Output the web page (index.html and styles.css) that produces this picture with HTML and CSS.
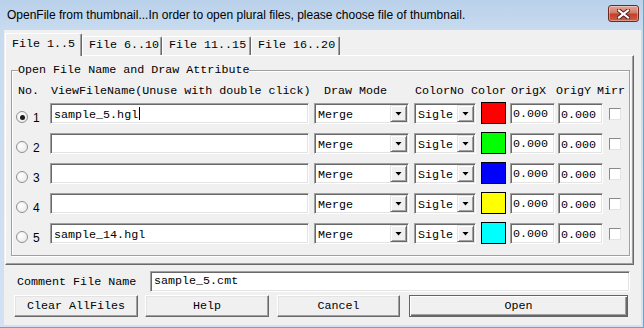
FILE: index.html
```html
<!DOCTYPE html>
<html lang="en">

<head>
  <meta charset="UTF-8">
  <title>OpenFile from thumbnail</title>
  <link rel="stylesheet" href="styles.css">
</head>

<body>
  <div class="window">
    <div class="titlebar">
      <span class="title">OpenFile from thumbnail...In order to open plural files, please choose file of thumbnail.</span>
      <div class="close">
        <svg width="13" height="10" viewBox="0 0 13 10">
          <path d="M2 1.5L11 8.5M11 1.5L2 8.5" stroke="#4a1a14" stroke-width="4" stroke-linecap="square" />
          <path d="M2 1.5L11 8.5M11 1.5L2 8.5" stroke="#fff" stroke-width="2.2" stroke-linecap="square" />
        </svg>
      </div>
    </div>

    <div class="client">
      <div class="tabs">
        <div class="tab active">File 1..5</div>
        <div class="tab t2">File 6..10</div>
        <div class="tab t3">File 11..15</div>
        <div class="tab t4">File 16..20</div>
      </div>

      <div class="panel">
        <fieldset class="group">
          <legend>Open File Name and Draw Attribute</legend>
          <div class="head">
            <span class="h-no">No.</span>
            <span class="h-name">ViewFileName(Unuse with double click)</span>
            <span class="h-mode">Draw Mode</span>
            <span class="h-cno">ColorNo</span>
            <span class="h-col">Color</span>
            <span class="h-ox">OrigX</span>
            <span class="h-oy">OrigY</span>
            <span class="h-mir">Mirr</span>
          </div>

          <div class="row">
            <span class="radio checked"></span>
            <span class="num">1</span>
            <div class="edit name">sample_5.hgl<span class="caret"></span></div>
            <div class="edit combo mode">Merge<span class="dd"></span></div>
            <div class="edit combo cno">Sigle<span class="dd"></span></div>
            <span class="swatch red"></span>
            <div class="edit orig ox">0.000</div>
            <div class="edit orig oy">0.000</div>
            <span class="check"></span>
          </div>
          <div class="row">
            <span class="radio"></span>
            <span class="num">2</span>
            <div class="edit name"></div>
            <div class="edit combo mode">Merge<span class="dd"></span></div>
            <div class="edit combo cno">Sigle<span class="dd"></span></div>
            <span class="swatch green"></span>
            <div class="edit orig ox">0.000</div>
            <div class="edit orig oy">0.000</div>
            <span class="check"></span>
          </div>
          <div class="row">
            <span class="radio"></span>
            <span class="num">3</span>
            <div class="edit name"></div>
            <div class="edit combo mode">Merge<span class="dd"></span></div>
            <div class="edit combo cno">Sigle<span class="dd"></span></div>
            <span class="swatch blue"></span>
            <div class="edit orig ox">0.000</div>
            <div class="edit orig oy">0.000</div>
            <span class="check"></span>
          </div>
          <div class="row">
            <span class="radio"></span>
            <span class="num">4</span>
            <div class="edit name"></div>
            <div class="edit combo mode">Merge<span class="dd"></span></div>
            <div class="edit combo cno">Sigle<span class="dd"></span></div>
            <span class="swatch yellow"></span>
            <div class="edit orig ox">0.000</div>
            <div class="edit orig oy">0.000</div>
            <span class="check"></span>
          </div>
          <div class="row">
            <span class="radio"></span>
            <span class="num">5</span>
            <div class="edit name">sample_14.hgl</div>
            <div class="edit combo mode">Merge<span class="dd"></span></div>
            <div class="edit combo cno">Sigle<span class="dd"></span></div>
            <span class="swatch cyan"></span>
            <div class="edit orig ox">0.000</div>
            <div class="edit orig oy">0.000</div>
            <span class="check"></span>
          </div>
        </fieldset>
      </div>

      <div class="comment">
        <span class="comment-label">Comment File Name</span>
        <div class="edit comment-edit">sample_5.cmt</div>
      </div>

      <div class="buttons">
        <div class="button b-clear">Clear AllFiles</div>
        <div class="button b-help">Help</div>
        <div class="button b-cancel">Cancel</div>
        <div class="button b-open">Open</div>
      </div>
    </div>
  </div>
</body>

</html>
```

FILE: styles.css
```css
* {
  box-sizing: border-box;
}

body {
  margin: 0;
  padding: 0;
  background-color: #c9dcf1;
}

.window {
  width: 644px;
  height: 328px;
  background: linear-gradient(#b9d1ea, #c8dbef 30px, #d2e2f3);
  border-right: 1px solid #3fb6e8;
  border-bottom: 1px solid #3fb6e8;
  display: flex;
  flex-direction: column;
  overflow: hidden;
}

/* title bar */
.titlebar {
  height: 30px;
  flex-shrink: 0;
  display: flex;
  align-items: flex-start;
  padding: 0 4px 0 7px;
}

.title {
  flex: 1;
  margin-top: 8px;
  font-family: "Liberation Sans", Arial, sans-serif;
  font-size: 12px;
  line-height: 15px;
  color: #000;
  white-space: nowrap;
}

.close {
  width: 31px;
  height: 17px;
  margin-top: 5px;
  border: 1px solid #6a2a22;
  border-radius: 3px;
  background: linear-gradient(#e4a597, #d47a66 45%, #c0402c 55%, #cf5d45);
  box-shadow: inset 0 0 0 1px rgba(255, 255, 255, 0.35);
  display: flex;
  align-items: center;
  justify-content: center;
}

/* client area */
.client {
  margin-left: 4px;
  width: 637px;
  height: 295px;
  flex-shrink: 0;
  background-color: #f0f0f0;
  font-family: "Liberation Mono", "Courier New", monospace;
  font-size: 11.7px;
  color: #000;
}

.tabs {
  height: 25px;
  padding-left: 1px;
  display: flex;
  align-items: flex-end;
  position: relative;
  z-index: 1;
}

.tab {
  height: 19px;
  line-height: 17px;
  padding-left: 6px;
  white-space: nowrap;
  background-color: #f0f0f0;
  border-top: 1px solid #fff;
  border-left: 1px solid #fff;
  border-right: 1px solid #696969;
  border-radius: 2px 2px 0 0;
  box-shadow: inset -1px 0 #a0a0a0;
}

.tab.active {
  width: 77px;
  height: 23px;
  margin-bottom: -1px;
  padding-left: 6px;
  line-height: 20px;
}

.t2 {
  width: 80px;
}

.t3 {
  width: 89px;
}

.t4 {
  width: 89px;
}

.panel {
  width: 629px;
  height: 210px;
  margin-left: 1px;
  padding: 7px 0 0 5px;
  border-top: 1px solid #fff;
  border-left: 1px solid #fff;
  border-right: 1px solid #696969;
  border-bottom: 1px solid #696969;
  box-shadow: inset -1px -1px #a0a0a0;
}

.group {
  width: 619px;
  height: 193px;
  margin: 0;
  padding: 0 4px;
  border: 1px solid #a0a0a0;
  box-shadow: inset 1px 1px #fff, 1px 1px #fff;
}

.group legend {
  margin-left: 2px;
  padding: 0;
  line-height: 14px;
  background-color: #f0f0f0;
}

.head {
  display: flex;
  height: 14px;
  line-height: 14px;
  margin-top: 7px;
  padding-left: 2px;
  white-space: nowrap;
}

.h-no { width: 33px; }
.h-name { width: 273px; }
.h-mode { width: 91px; }
.h-cno { width: 56px; }
.h-col { width: 40px; }
.h-ox { width: 45px; }
.h-oy { width: 41px; }

.row {
  display: flex;
  align-items: flex-start;
  height: 21px;
  margin-top: 9px;
}

.head + .row {
  margin-top: 5px;
}

.radio {
  width: 12px;
  height: 12px;
  margin-top: 8px;
  border: 1px solid #8f8f8f;
  border-radius: 50%;
  background: radial-gradient(circle at 35% 35%, #fff, #e6e6e6);
  display: flex;
  align-items: center;
  justify-content: center;
}

.radio.checked::after {
  content: "";
  width: 5px;
  height: 5px;
  border-radius: 50%;
  background-color: #1a1a1a;
}

.num {
  width: 17px;
  margin-left: 5px;
  margin-top: 8px;
  line-height: 14px;
  font-family: "Liberation Sans", Arial, sans-serif;
  font-size: 12px;
}

/* sunken edit box */
.edit {
  height: 21px;
  padding-left: 3px;
  line-height: 18px;
  background-color: #fff;
  white-space: nowrap;
  border: 1px solid;
  border-color: #a0a0a0 #fff #fff #a0a0a0;
  box-shadow: inset 1px 1px #696969, inset -1px -1px #e3e3e3;
}

.row .edit {
  padding-top: 2px;
}

.caret {
  display: inline-block;
  width: 1px;
  height: 13px;
  margin-left: 1px;
  vertical-align: -2px;
  background-color: #000;
}

.name {
  width: 259px;
}

.combo {
  display: flex;
  align-items: flex-start;
  justify-content: space-between;
  padding-right: 1px;
}

.mode {
  width: 95px;
  margin-left: 5px;
}

.cno {
  width: 62px;
  margin-left: 5px;
}

.dd {
  width: 17px;
  height: 17px;
  margin-top: -1px;
  background-color: #f0f0f0;
  border: 1px solid;
  border-color: #e3e3e3 #696969 #696969 #e3e3e3;
  box-shadow: inset 1px 1px #fff, inset -1px -1px #a0a0a0;
  display: flex;
  align-items: center;
  justify-content: center;
}

.dd::after {
  content: "";
  width: 7px;
  height: 4px;
  background-color: #000;
  clip-path: polygon(0 0, 100% 0, 50% 100%);
}

.swatch {
  width: 25px;
  height: 22px;
  margin-left: 5px;
  margin-top: -1px;
  border: 1px solid #000;
}

.red { background-color: #ff0000; }
.green { background-color: #00ff00; }
.blue { background-color: #0000ff; }
.yellow { background-color: #ffff00; }
.cyan { background-color: #00ffff; }

.orig {
  width: 45px;
  padding-left: 2px;
}

.row .ox {
  margin-left: 4px;
  padding-top: 1px;
}

.oy {
  margin-left: 3px;
}

.check {
  width: 12px;
  height: 12px;
  margin-left: 6px;
  margin-top: 5px;
  background-color: #fff;
  border: 1px solid;
  border-color: #8a8a8a #e3e3e3 #e3e3e3 #8a8a8a;
}

/* comment line and buttons */
.comment {
  display: flex;
  align-items: center;
  margin-top: 6px;
  height: 21px;
}

.comment-label {
  width: 133px;
  margin-left: 13px;
  white-space: nowrap;
}

.comment-edit {
  width: 480px;
}

.buttons {
  display: flex;
  margin-top: 3px;
  margin-left: 10px;
}

.button {
  height: 22px;
  line-height: 20px;
  text-align: center;
  white-space: nowrap;
  background-color: #f0f0f0;
  border: 1px solid;
  border-color: #fff #696969 #696969 #fff;
  box-shadow: inset -1px -1px #a0a0a0, inset 1px 1px #e3e3e3;
}

.b-clear {
  width: 124px;
}

.b-help {
  width: 124px;
  margin-left: 7px;
}

.b-cancel {
  width: 123px;
  margin-left: 8px;
}

.b-open {
  width: 219px;
  margin-left: 9px;
  border-color: #646464;
  box-shadow: inset 1px 1px #fff, inset -1px -1px #696969, inset -2px -2px #a0a0a0;
}
```
